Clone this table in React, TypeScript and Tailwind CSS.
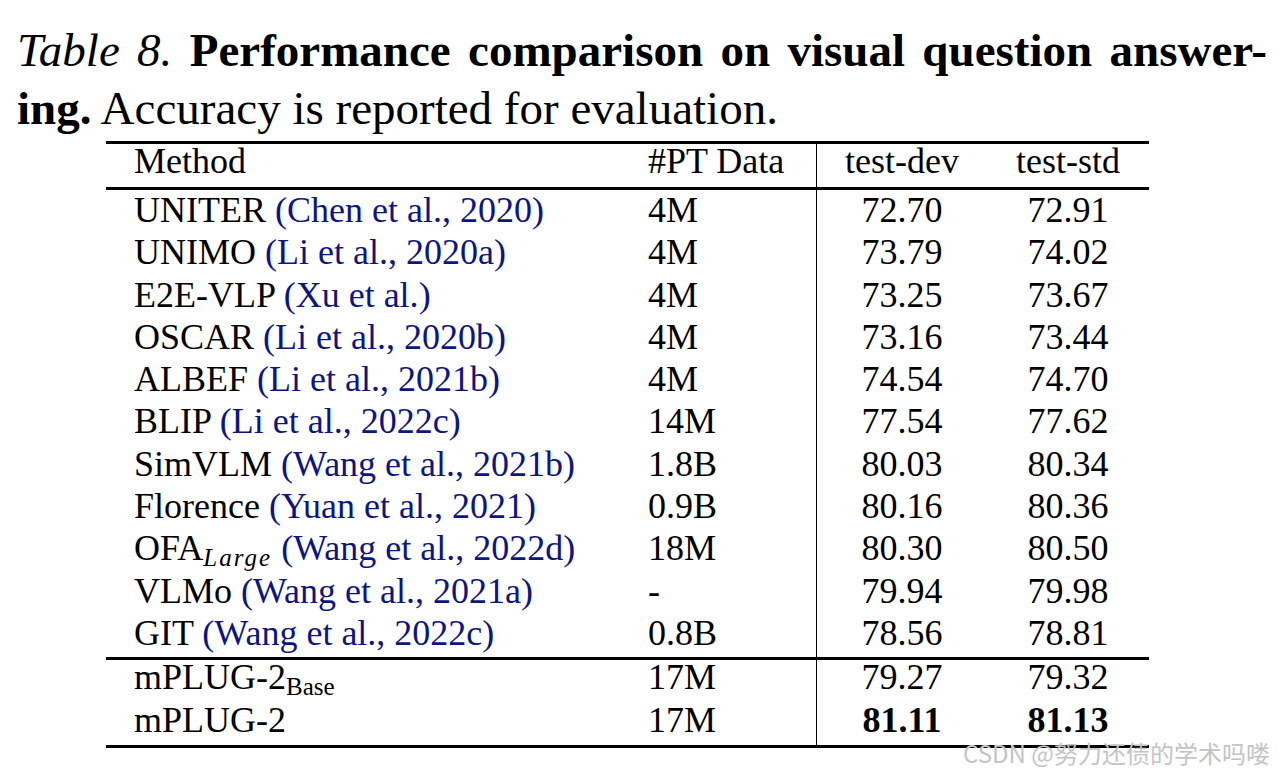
type Row = {
  name: string;
  sub?: string;
  cite?: string;
  data: string;
  dev: string;
  std: string;
};

const rows: Row[] = [
  { name: "UNITER", cite: "Chen et al., 2020", data: "4M", dev: "72.70", std: "72.91" },
  { name: "UNIMO", cite: "Li et al., 2020a", data: "4M", dev: "73.79", std: "74.02" },
  { name: "E2E-VLP", cite: "Xu et al.", data: "4M", dev: "73.25", std: "73.67" },
  { name: "OSCAR", cite: "Li et al., 2020b", data: "4M", dev: "73.16", std: "73.44" },
  { name: "ALBEF", cite: "Li et al., 2021b", data: "4M", dev: "74.54", std: "74.70" },
  { name: "BLIP", cite: "Li et al., 2022c", data: "14M", dev: "77.54", std: "77.62" },
  { name: "SimVLM", cite: "Wang et al., 2021b", data: "1.8B", dev: "80.03", std: "80.34" },
  { name: "Florence", cite: "Yuan et al., 2021", data: "0.9B", dev: "80.16", std: "80.36" },
  { name: "OFA", sub: "Large", cite: "Wang et al., 2022d", data: "18M", dev: "80.30", std: "80.50" },
  { name: "VLMo", cite: "Wang et al., 2021a", data: "-", dev: "79.94", std: "79.98" },
  { name: "GIT", cite: "Wang et al., 2022c", data: "0.8B", dev: "78.56", std: "78.81" },
];

const grid = "grid grid-cols-[514px_196px_171px_162px]";

const Rule = () => <div className="h-[3px] bg-black" />;

export default function App() {
  return (
    <div
      className="relative w-[1280px] h-[776px] overflow-hidden bg-white text-black pt-[22px]"
      style={{ fontFamily: '"Liberation Serif", "Times New Roman", serif' }}
    >
      {/* caption */}
      <div className="ml-[17px] w-[1250px] text-[47px] leading-[57.5px]">
        <div className="text-justify [text-align-last:justify]">
          <span className="italic">Table 8.</span>{" "}
          <span className="font-bold">Performance comparison on visual question answer-</span>
        </div>
        <div>
          <span className="font-bold">ing.</span> Accuracy is reported for evaluation.
        </div>
      </div>

      {/* table */}
      <div className="ml-[106px] mt-[4px] w-[1043px] text-[36px]">
        <Rule />
        <div className={`${grid} h-[43px] leading-[35.6px]`}>
          <div className="pl-[28px]">Method</div>
          <div className="pl-[28px]">#PT Data</div>
          <div className="border-l border-black text-center">test-dev</div>
          <div className="text-center">test-std</div>
        </div>
        <Rule />
        {rows.map((r, i) => (
          <div
            key={r.name}
            className={`${grid} leading-[40.5px] ${i === rows.length - 1 ? "h-[44px]" : "h-[42.3px]"}`}
          >
            <div className="pl-[28px] whitespace-nowrap">
              {r.name}
              {r.sub && (
                <span className="italic text-[25px] leading-none tracking-[2px] align-[-6px]">{r.sub}</span>
              )}{" "}
              <span className="text-[#0c1585]">({r.cite})</span>
            </div>
            <div className="pl-[28px]">{r.data}</div>
            <div className="border-l border-black text-center">{r.dev}</div>
            <div className="text-center">{r.std}</div>
          </div>
        ))}
        <Rule />
        <div className={`${grid} h-[39.3px] leading-[35.6px]`}>
          <div className="pl-[28px] whitespace-nowrap">
            mPLUG-2<span className="text-[25px] leading-none align-[-6px]">Base</span>
          </div>
          <div className="pl-[28px]">17M</div>
          <div className="border-l border-black text-center">79.27</div>
          <div className="text-center">79.32</div>
        </div>
        <div className={`${grid} h-[45.4px] leading-[42.3px]`}>
          <div className="pl-[28px]">mPLUG-2</div>
          <div className="pl-[28px]">17M</div>
          <div className="border-l border-black text-center font-bold">81.11</div>
          <div className="text-center font-bold">81.13</div>
        </div>
        <Rule />
      </div>

      {/* watermark */}
      <div
        className="absolute left-[963px] top-[741px] text-[24px] leading-none text-[#c4c4c4] whitespace-nowrap"
        style={{ fontFamily: '"Noto Sans CJK SC", "Noto Sans", sans-serif' }}
      >
        CSDN @努力还债的学术吗喽
      </div>
    </div>
  );
}
